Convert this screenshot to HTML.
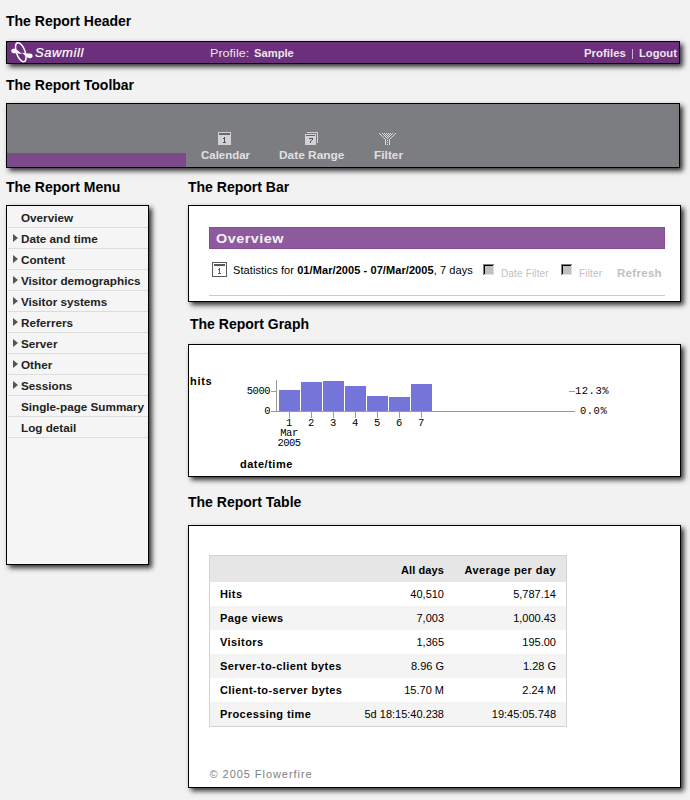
<!DOCTYPE html>
<html><head><meta charset="utf-8">
<style>
html,body{margin:0;padding:0;}
body{width:690px;height:800px;background:#f2f2f2;position:relative;overflow:hidden;font-family:"Liberation Sans",sans-serif;color:#000;}
.a{position:absolute;white-space:nowrap;}
.t{position:absolute;font-weight:bold;font-size:14px;line-height:16px;white-space:nowrap;}
.box{position:absolute;box-sizing:border-box;border:1px solid #000;box-shadow:3px 3px 5px rgba(0,0,0,.8);}
.mi{position:absolute;left:21.4px;font-size:10px;line-height:13px;font-weight:bold;color:#222;letter-spacing:0;white-space:nowrap;transform:scaleX(1.17);transform-origin:0 0}
.ar{position:absolute;left:13px}
.sep{position:absolute;left:8px;width:140px;height:1px;background:#dcdcdc}
.ov{position:absolute;left:0;top:0}
.gm{position:absolute;font-family:"Liberation Mono",monospace;font-size:10.5px;line-height:11px;letter-spacing:-.5px;white-space:nowrap;color:#000}
.gr{text-align:right;width:60px}
.gc{text-align:center;width:40px}
.tb{position:absolute;font-size:11px;line-height:13px;font-weight:bold;white-space:nowrap;letter-spacing:.42px}
.tn{position:absolute;font-size:11px;line-height:13px;white-space:nowrap}
.vx{transform-origin:0 0}
</style></head><body>

<div class="t" style="left:6px;top:13px">The Report Header</div>
<div class="box" style="left:6px;top:41px;width:674px;height:23px;background:#6b2f7b;"></div>
<svg class="ov" style="left:8px;top:40px" width="28" height="24">
<ellipse cx="12.8" cy="12.2" rx="4.3" ry="10" transform="rotate(-20 12.8 12.2)" fill="none" stroke="#fff" stroke-width="1.5"/>
<path d="M3.3,10.2 C4.3,7.9 7.6,8.3 9.8,10.4 L14.2,14.2 C11.2,13.6 8.6,13.1 6.1,13.3 C4.5,13.4 2.9,12.2 3.3,10.2 Z" fill="#fff"/>
<path d="M24.6,16.6 C23.6,18.9 20.3,18.5 18.1,16.4 L13.7,12.6 C16.7,13.2 19.3,13.7 21.8,13.5 C23.4,13.4 25,14.6 24.6,16.6 Z" fill="#fff"/>
</svg>
<div class="a" style="left:35px;top:45px;font-size:13px;line-height:15px;font-style:italic;color:#fff;letter-spacing:.6px;-webkit-text-stroke:.2px #fff">Sawmill</div>
<div class="a vx" style="left:210px;top:47px;font-size:10px;line-height:13px;color:#ece4ec;transform:scaleX(1.26)">Profile:</div>
<div class="a vx" style="left:253.5px;top:47px;font-size:10px;line-height:13px;color:#ece4ec;font-weight:bold;transform:scaleX(1.12)">Sample</div>
<div class="a vx" style="left:583.5px;top:47px;font-size:10px;line-height:13px;color:#ece4ec;font-weight:bold;transform:scaleX(1.14)">Profiles</div>
<div style="position:absolute;left:632px;top:49px;width:1px;height:10px;background:#c8b0d0"></div>
<div class="a vx" style="left:638.5px;top:47px;font-size:10px;line-height:13px;color:#ece4ec;font-weight:bold;transform:scaleX(1.12)">Logout</div>

<div class="t" style="left:6px;top:77px">The Report Toolbar</div>
<div class="box" style="left:6px;top:103px;width:674px;height:65px;background:#7c7d81;">
  <div style="position:absolute;left:0;top:49px;width:179px;height:14px;background:#7c4a8b"></div>
</div>
<div class="a vx" style="left:201px;top:149px;font-size:10px;line-height:13px;font-weight:bold;color:#e0e0e0;transform:scaleX(1.145)">Calendar</div>
<div class="a vx" style="left:278.5px;top:149px;font-size:10px;line-height:13px;font-weight:bold;color:#e0e0e0;transform:scaleX(1.19)">Date Range</div>
<div class="a vx" style="left:373.5px;top:149px;font-size:10px;line-height:13px;font-weight:bold;color:#e0e0e0;transform:scaleX(1.19)">Filter</div>

<svg class="ov" width="690" height="800" shape-rendering="crispEdges"><rect x="218" y="132" width="13" height="13" fill="#d2d2d4"/><rect x="219" y="133" width="11" height="2" fill="#68696d"/><rect x="224" y="137" width="1" height="6" fill="#505155"/><rect x="223" y="138" width="1" height="1" fill="#505155"/><rect x="223" y="142" width="3" height="1" fill="#505155"/><rect x="307" y="132" width="11" height="11" fill="#d2d2d4"/><rect x="308" y="133" width="9" height="9" fill="#68696d"/><rect x="304" y="133" width="13" height="13" fill="#7c7d81"/><rect x="305" y="134" width="11" height="11" fill="#d2d2d4"/><rect x="306" y="135" width="9" height="1" fill="#68696d"/><rect x="309" y="138" width="4" height="1" fill="#505155"/><rect x="312" y="139" width="1" height="1" fill="#505155"/><rect x="311" y="140" width="1" height="1" fill="#505155"/><rect x="310" y="141" width="1" height="2" fill="#505155"/><rect x="379" y="133" width="1" height="1" fill="#dadada"/><rect x="395" y="133" width="1" height="1" fill="#dadada"/><rect x="380" y="134" width="1" height="1" fill="#dadada"/><rect x="394" y="134" width="1" height="1" fill="#dadada"/><rect x="381" y="135" width="1" height="1" fill="#dadada"/><rect x="393" y="135" width="1" height="1" fill="#dadada"/><rect x="382" y="136" width="1" height="1" fill="#dadada"/><rect x="392" y="136" width="1" height="1" fill="#dadada"/><rect x="383" y="137" width="1" height="1" fill="#dadada"/><rect x="391" y="137" width="1" height="1" fill="#dadada"/><rect x="384" y="138" width="1" height="1" fill="#dadada"/><rect x="390" y="138" width="1" height="1" fill="#dadada"/><rect x="385" y="139" width="1" height="1" fill="#dadada"/><rect x="389" y="139" width="1" height="1" fill="#dadada"/><rect x="382" y="133" width="1" height="1" fill="#dadada"/><rect x="384" y="133" width="1" height="1" fill="#dadada"/><rect x="386" y="133" width="1" height="1" fill="#dadada"/><rect x="388" y="133" width="1" height="1" fill="#dadada"/><rect x="390" y="133" width="1" height="1" fill="#dadada"/><rect x="392" y="133" width="1" height="1" fill="#dadada"/><rect x="383" y="134" width="1" height="1" fill="#dadada"/><rect x="385" y="134" width="1" height="1" fill="#dadada"/><rect x="387" y="134" width="1" height="1" fill="#dadada"/><rect x="389" y="134" width="1" height="1" fill="#dadada"/><rect x="391" y="134" width="1" height="1" fill="#dadada"/><rect x="384" y="135" width="1" height="1" fill="#dadada"/><rect x="386" y="135" width="1" height="1" fill="#dadada"/><rect x="388" y="135" width="1" height="1" fill="#dadada"/><rect x="390" y="135" width="1" height="1" fill="#dadada"/><rect x="385" y="136" width="1" height="1" fill="#dadada"/><rect x="387" y="136" width="1" height="1" fill="#dadada"/><rect x="389" y="136" width="1" height="1" fill="#dadada"/><rect x="386" y="137" width="1" height="1" fill="#dadada"/><rect x="388" y="137" width="1" height="1" fill="#dadada"/><rect x="387" y="138" width="1" height="1" fill="#dadada"/><rect x="385" y="139" width="1" height="6" fill="#dadada"/><rect x="389" y="139" width="1" height="6" fill="#dadada"/><rect x="387" y="140" width="1" height="1" fill="#dadada"/><rect x="387" y="142" width="1" height="1" fill="#dadada"/><rect x="387" y="144" width="1" height="1" fill="#dadada"/></svg>
<div class="t" style="left:6px;top:179px">The Report Menu</div>
<div class="t" style="left:188px;top:179px">The Report Bar</div>

<div class="box" style="left:6px;top:205px;width:143px;height:360px;background:#f5f5f5;"></div>
<div class="mi" style="top:212px">Overview</div>
<div class="sep" style="top:227px"></div>
<div class="mi" style="top:233px">Date and time</div>
<svg class="ar" style="top:234px" width="6" height="8"><polygon points="0,0 5,4 0,8" fill="#555"/></svg>
<div class="sep" style="top:248px"></div>
<div class="mi" style="top:254px">Content</div>
<svg class="ar" style="top:255px" width="6" height="8"><polygon points="0,0 5,4 0,8" fill="#555"/></svg>
<div class="sep" style="top:269px"></div>
<div class="mi" style="top:275px">Visitor demographics</div>
<svg class="ar" style="top:276px" width="6" height="8"><polygon points="0,0 5,4 0,8" fill="#555"/></svg>
<div class="sep" style="top:290px"></div>
<div class="mi" style="top:296px">Visitor systems</div>
<svg class="ar" style="top:297px" width="6" height="8"><polygon points="0,0 5,4 0,8" fill="#555"/></svg>
<div class="sep" style="top:311px"></div>
<div class="mi" style="top:317px">Referrers</div>
<svg class="ar" style="top:318px" width="6" height="8"><polygon points="0,0 5,4 0,8" fill="#555"/></svg>
<div class="sep" style="top:332px"></div>
<div class="mi" style="top:338px">Server</div>
<svg class="ar" style="top:339px" width="6" height="8"><polygon points="0,0 5,4 0,8" fill="#555"/></svg>
<div class="sep" style="top:353px"></div>
<div class="mi" style="top:359px">Other</div>
<svg class="ar" style="top:360px" width="6" height="8"><polygon points="0,0 5,4 0,8" fill="#555"/></svg>
<div class="sep" style="top:374px"></div>
<div class="mi" style="top:380px">Sessions</div>
<svg class="ar" style="top:381px" width="6" height="8"><polygon points="0,0 5,4 0,8" fill="#555"/></svg>
<div class="sep" style="top:395px"></div>
<div class="mi" style="top:401px">Single-page Summary</div>
<div class="sep" style="top:416px"></div>
<div class="mi" style="top:422px">Log detail</div>
<div class="sep" style="top:437px"></div>

<div class="box" style="left:188px;top:205px;width:493px;height:97px;background:#fff;"></div>

<svg class="ov" width="690" height="800" shape-rendering="crispEdges"><rect x="209" y="227" width="456" height="22" fill="#884d98"/><rect x="210" y="228" width="454" height="20" fill="#8d5a9d"/><rect x="212" y="262" width="15" height="15" fill="#58595d"/><rect x="213" y="263" width="13" height="13" fill="#fff"/><rect x="214" y="264" width="11" height="2" fill="#58595d"/><rect x="219" y="268" width="1" height="6" fill="#58595d"/><rect x="218" y="269" width="1" height="1" fill="#58595d"/><rect x="218" y="273" width="3" height="1" fill="#58595d"/><rect x="483" y="264" width="12" height="12" fill="#fff"/><rect x="483" y="264" width="11" height="11" fill="#808080"/><rect x="484" y="265" width="10" height="10" fill="#dfdfdf"/><rect x="484" y="265" width="9" height="9" fill="#000"/><rect x="485" y="266" width="8" height="8" fill="#c0c0c0"/><rect x="561" y="264" width="12" height="12" fill="#fff"/><rect x="561" y="264" width="11" height="11" fill="#808080"/><rect x="562" y="265" width="10" height="10" fill="#dfdfdf"/><rect x="562" y="265" width="9" height="9" fill="#000"/><rect x="563" y="266" width="8" height="8" fill="#c0c0c0"/><rect x="209" y="295" width="456" height="1" fill="#cfc6d6"/></svg>
<div class="a" style="left:216px;top:232px;font-size:12.5px;line-height:15px;font-weight:bold;color:#f4f0f4;letter-spacing:.45px;transform:scaleX(1.15);transform-origin:0 0">Overview</div>
<div class="a" style="left:233px;top:264px;font-size:11px;line-height:13px;color:#000;letter-spacing:.08px">Statistics for <b>01/Mar/2005 - 07/Mar/2005</b>, 7 days</div>
<div class="a" style="left:501px;top:268px;font-size:10px;line-height:12px;color:#c0c0c0;letter-spacing:.15px">Date Filter</div>
<div class="a" style="left:579px;top:268px;font-size:10px;line-height:12px;color:#c0c0c0;letter-spacing:.15px">Filter</div>
<div class="a" style="left:617px;top:267px;font-size:11.5px;line-height:13px;font-weight:bold;color:#c0c0c0;letter-spacing:.3px">Refresh</div>
<div class="t" style="left:190px;top:316px">The Report Graph</div>
<div class="box" style="left:188px;top:344px;width:493px;height:133px;background:#fff;"></div>

<svg class="ov" width="690" height="800" shape-rendering="crispEdges"><rect x="279" y="390" width="21" height="21" fill="#7575d9"/><rect x="289" y="412" width="1" height="6" fill="#999999"/><rect x="301" y="382" width="21" height="29" fill="#7575d9"/><rect x="311" y="412" width="1" height="6" fill="#999999"/><rect x="323" y="381" width="21" height="30" fill="#7575d9"/><rect x="333" y="412" width="1" height="6" fill="#999999"/><rect x="345" y="386" width="21" height="25" fill="#7575d9"/><rect x="355" y="412" width="1" height="6" fill="#999999"/><rect x="367" y="396" width="21" height="15" fill="#7575d9"/><rect x="377" y="412" width="1" height="6" fill="#999999"/><rect x="389" y="397" width="21" height="14" fill="#7575d9"/><rect x="399" y="412" width="1" height="6" fill="#999999"/><rect x="411" y="384" width="21" height="27" fill="#7575d9"/><rect x="421" y="412" width="1" height="6" fill="#999999"/><rect x="276" y="380" width="1" height="31" fill="#999999"/><rect x="271" y="411" width="304" height="1" fill="#999999"/><rect x="271" y="391" width="5" height="1" fill="#999999"/><rect x="569" y="391" width="6" height="1" fill="#999999"/></svg>
<div class="a" style="left:190px;top:375px;font-size:11px;line-height:13px;font-weight:bold;letter-spacing:.7px">hits</div>
<div class="a" style="left:240px;top:458px;font-size:11px;line-height:13px;font-weight:bold;letter-spacing:.5px">date/time</div>
<div class="gm gr" style="left:210px;top:386px">5000</div>
<div class="gm gr" style="left:210px;top:406px">0</div>
<div class="gm" style="left:575px;top:386px;letter-spacing:.5px">12.3%</div>
<div class="gm" style="left:580px;top:406px;letter-spacing:.5px">0.0%</div>
<div class="gm gc" style="left:269px;top:418px">1</div>
<div class="gm gc" style="left:291px;top:418px">2</div>
<div class="gm gc" style="left:313px;top:418px">3</div>
<div class="gm gc" style="left:335px;top:418px">4</div>
<div class="gm gc" style="left:357px;top:418px">5</div>
<div class="gm gc" style="left:379px;top:418px">6</div>
<div class="gm gc" style="left:401px;top:418px">7</div>
<div class="gm gc" style="left:269px;top:428px">Mar</div>
<div class="gm gc" style="left:269px;top:438px">2005</div>
<div class="t" style="left:188px;top:494px">The Report Table</div>
<div class="box" style="left:188px;top:525px;width:493px;height:263px;background:#fff;"></div>

<svg class="ov" width="690" height="800" shape-rendering="crispEdges"><rect x="209" y="555" width="358" height="172" fill="#d4d4d4"/><rect x="210" y="556" width="356" height="26" fill="#e6e6e6"/><rect x="210" y="582" width="356" height="24" fill="#ffffff"/><rect x="210" y="606" width="356" height="24" fill="#f4f4f4"/><rect x="210" y="630" width="356" height="24" fill="#ffffff"/><rect x="210" y="654" width="356" height="24" fill="#f4f4f4"/><rect x="210" y="678" width="356" height="24" fill="#ffffff"/><rect x="210" y="702" width="356" height="24" fill="#f4f4f4"/></svg>
<div class="tb" style="top:564px;left:344px;width:100px;text-align:right;letter-spacing:.1px">All days</div>
<div class="tb" style="top:564px;left:456px;width:100px;text-align:right">Average per day</div>
<div class="tb" style="top:588px;left:220px">Hits</div>
<div class="tn" style="top:588px;left:344px;width:100px;text-align:right">40,510</div>
<div class="tn" style="top:588px;left:456px;width:100px;text-align:right">5,787.14</div>
<div class="tb" style="top:612px;left:220px">Page views</div>
<div class="tn" style="top:612px;left:344px;width:100px;text-align:right">7,003</div>
<div class="tn" style="top:612px;left:456px;width:100px;text-align:right">1,000.43</div>
<div class="tb" style="top:636px;left:220px">Visitors</div>
<div class="tn" style="top:636px;left:344px;width:100px;text-align:right">1,365</div>
<div class="tn" style="top:636px;left:456px;width:100px;text-align:right">195.00</div>
<div class="tb" style="top:660px;left:220px">Server-to-client bytes</div>
<div class="tn" style="top:660px;left:344px;width:100px;text-align:right">8.96 G</div>
<div class="tn" style="top:660px;left:456px;width:100px;text-align:right">1.28 G</div>
<div class="tb" style="top:684px;left:220px">Client-to-server bytes</div>
<div class="tn" style="top:684px;left:344px;width:100px;text-align:right">15.70 M</div>
<div class="tn" style="top:684px;left:456px;width:100px;text-align:right">2.24 M</div>
<div class="tb" style="top:708px;left:220px">Processing time</div>
<div class="tn" style="top:708px;left:344px;width:100px;text-align:right">5d 18:15:40.238</div>
<div class="tn" style="top:708px;left:456px;width:100px;text-align:right">19:45:05.748</div>
<div class="a" style="left:209.5px;top:768px;font-size:11px;line-height:13px;color:#808080;letter-spacing:.95px">&copy; 2005 Flowerfire</div>
</body></html>
